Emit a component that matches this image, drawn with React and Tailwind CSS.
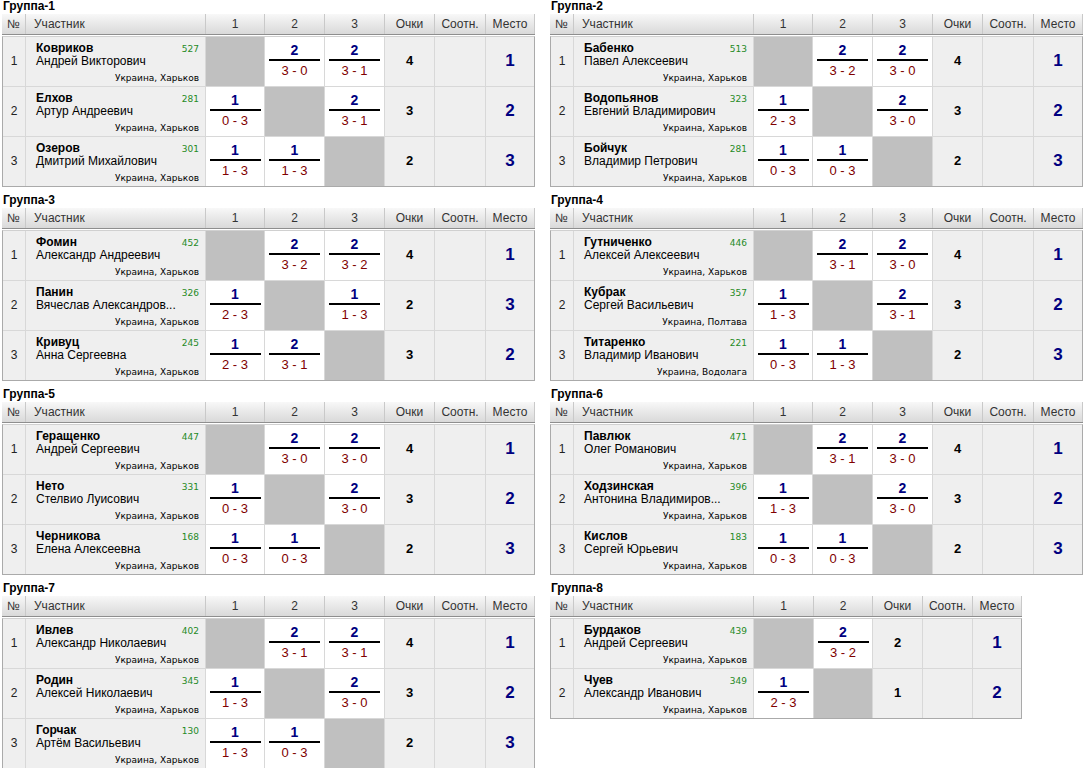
import React from "react";

const KH = "Украина, Харьков";

// score: null = diagonal, otherwise [won, "a - b"]
const groups = [
  {
    title: "Группа-1",
    rows: [
      ["Ковриков", "Андрей Викторович", 527, KH, [null, [2, "3 - 0"], [2, "3 - 1"]], 4, 1],
      ["Елхов", "Артур Андреевич", 281, KH, [[1, "0 - 3"], null, [2, "3 - 1"]], 3, 2],
      ["Озеров", "Дмитрий Михайлович", 301, KH, [[1, "1 - 3"], [1, "1 - 3"], null], 2, 3],
    ],
  },
  {
    title: "Группа-2",
    rows: [
      ["Бабенко", "Павел Алексеевич", 513, KH, [null, [2, "3 - 2"], [2, "3 - 0"]], 4, 1],
      ["Водопьянов", "Евгений Владимирович", 323, KH, [[1, "2 - 3"], null, [2, "3 - 0"]], 3, 2],
      ["Бойчук", "Владимир Петрович", 281, KH, [[1, "0 - 3"], [1, "0 - 3"], null], 2, 3],
    ],
  },
  {
    title: "Группа-3",
    rows: [
      ["Фомин", "Александр Андреевич", 452, KH, [null, [2, "3 - 2"], [2, "3 - 2"]], 4, 1],
      ["Панин", "Вячеслав Александров...", 326, KH, [[1, "2 - 3"], null, [1, "1 - 3"]], 2, 3],
      ["Кривуц", "Анна Сергеевна", 245, KH, [[1, "2 - 3"], [2, "3 - 1"], null], 3, 2],
    ],
  },
  {
    title: "Группа-4",
    rows: [
      ["Гутниченко", "Алексей Алексеевич", 446, KH, [null, [2, "3 - 1"], [2, "3 - 0"]], 4, 1],
      ["Кубрак", "Сергей Васильевич", 357, "Украина, Полтава", [[1, "1 - 3"], null, [2, "3 - 1"]], 3, 2],
      ["Титаренко", "Владимир Иванович", 221, "Украина, Водолага", [[1, "0 - 3"], [1, "1 - 3"], null], 2, 3],
    ],
  },
  {
    title: "Группа-5",
    rows: [
      ["Геращенко", "Андрей Сергеевич", 447, KH, [null, [2, "3 - 0"], [2, "3 - 0"]], 4, 1],
      ["Нето", "Стелвио Луисович", 331, KH, [[1, "0 - 3"], null, [2, "3 - 0"]], 3, 2],
      ["Черникова", "Елена Алексеевна", 168, KH, [[1, "0 - 3"], [1, "0 - 3"], null], 2, 3],
    ],
  },
  {
    title: "Группа-6",
    rows: [
      ["Павлюк", "Олег Романович", 471, KH, [null, [2, "3 - 1"], [2, "3 - 0"]], 4, 1],
      ["Ходзинская", "Антонина Владимиров...", 396, KH, [[1, "1 - 3"], null, [2, "3 - 0"]], 3, 2],
      ["Кислов", "Сергей Юрьевич", 183, KH, [[1, "0 - 3"], [1, "0 - 3"], null], 2, 3],
    ],
  },
  {
    title: "Группа-7",
    rows: [
      ["Ивлев", "Александр Николаевич", 402, KH, [null, [2, "3 - 1"], [2, "3 - 1"]], 4, 1],
      ["Родин", "Алексей Николаевич", 345, KH, [[1, "1 - 3"], null, [2, "3 - 0"]], 3, 2],
      ["Горчак", "Артём Васильевич", 130, KH, [[1, "1 - 3"], [1, "0 - 3"], null], 2, 3],
    ],
  },
  {
    title: "Группа-8",
    rows: [
      ["Бурдаков", "Андрей Сергеевич", 439, KH, [null, [2, "3 - 2"]], 2, 1],
      ["Чуев", "Александр Иванович", 349, KH, [[1, "2 - 3"], null], 1, 2],
    ],
  },
];

const HeadCell = ({ children, left }) => (
  <div
    className={`border-r border-[#c9c9c9] text-[12px] leading-[20px] text-[#333] ${
      left ? "pl-[8px] text-left" : "text-center"
    }`}
  >
    {children}
  </div>
);

const ScoreCell = ({ s }) => {
  if (!s) return <div className="bg-[#c0c0c0] border-r border-[#d8d8d8]" />;
  return (
    <div className="bg-white border-r border-[#d8d8d8] flex flex-col items-center justify-center pb-[3px]">
      <div className="text-[14px] leading-[14px] font-bold text-[#000080]">{s[0]}</div>
      <div className="mt-[2px] h-[2px] w-[51px] bg-black" />
      <div className="mt-[3px] text-[13px] leading-[13px] text-[#800000]">{s[1]}</div>
    </div>
  );
};

const Group = ({ g }) => {
  const two = g.rows.length === 2;
  const headCols = two
    ? "grid-cols-[24px_180px_60px_59px_50px_50px_49px]"
    : "grid-cols-[24px_180px_59px_60px_60px_50px_51px_49px]";
  const bodyCols = two
    ? "grid-cols-[23px_180px_60px_59px_50px_50px_48px]"
    : "grid-cols-[23px_180px_59px_60px_60px_50px_51px_48px]";

  return (
    <div className={two ? "w-[472px]" : "w-[533px]"}>
      <div className="h-[14px] pl-[1px] text-[12px] leading-[12px] font-bold text-black">
        {g.title}
      </div>
      <div
        className={`grid ${headCols} h-[21px] border-b border-[#8e8e8e] bg-gradient-to-b from-[#f8f8f8] to-[#d9d9d9]`}
      >
        <HeadCell>№</HeadCell>
        <HeadCell left>Участник</HeadCell>
        {g.rows.map((_, i) => (
          <HeadCell key={i}>{i + 1}</HeadCell>
        ))}
        <HeadCell>Очки</HeadCell>
        <HeadCell>Соотн.</HeadCell>
        <HeadCell>Место</HeadCell>
      </div>
      <div className="mt-[1px] border border-[#aaaaaa] border-t-[#d0d0d0]">
        {g.rows.map((r, i) => (
          <div
            key={i}
            className={`grid ${bodyCols} h-[50px] border-b border-[#d8d8d8] last:h-[49px] last:border-b-0`}
          >
            <div className="bg-[#efefef] border-r border-[#d8d8d8] flex items-center justify-center pb-[2px] text-[12px] text-[#222]">
              {i + 1}
            </div>
            <div className="bg-[#efefef] border-r border-[#d8d8d8] flex flex-col pl-[10px] pr-[6px] pt-[5px] pb-[3px]">
              <div className="flex items-baseline justify-between">
                <span className="text-[12px] leading-[12px] font-bold text-black">{r[0]}</span>
                <span className="font-['DejaVu_Sans',Verdana,sans-serif] text-[9px] leading-[12px] text-[#1f8a1f]">
                  {r[2]}
                </span>
              </div>
              <div className="text-[12px] leading-[13px] text-black whitespace-nowrap">{r[1]}</div>
              <div className="mt-auto text-right font-['DejaVu_Sans',Verdana,sans-serif] text-[9px] leading-[10px] text-black">
                {r[3]}
              </div>
            </div>
            {r[4].map((s, j) => (
              <ScoreCell key={j} s={s} />
            ))}
            <div className="bg-[#efefef] border-r border-[#d8d8d8] flex items-center justify-center pb-[2px] text-[13px] font-bold text-black">
              {r[5]}
            </div>
            <div className="bg-[#efefef] border-r border-[#d8d8d8]" />
            <div className="bg-[#efefef] flex items-center justify-center pb-[2px] text-[17px] font-bold text-[#000080]">
              {r[6]}
            </div>
          </div>
        ))}
      </div>
    </div>
  );
}

export default function App() {
  return (
    <div className="w-[1086px] h-[768px] bg-white pl-[2px] font-['Liberation_Sans',Arial,sans-serif]">
      <div className="grid grid-cols-[533px_533px] gap-x-[15px] gap-y-[7px]">
        {groups.map((g) => (
          <Group key={g.title} g={g} />
        ))}
      </div>
    </div>
  );
}
